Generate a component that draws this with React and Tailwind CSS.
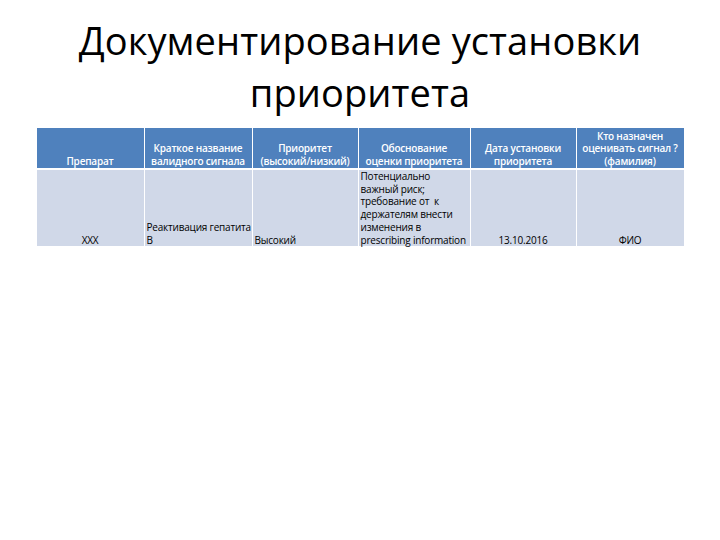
import React from "react";

const headers = [
  ["Препарат"],
  ["Краткое название", "валидного сигнала"],
  ["Приоритет", "(высокий/низкий)"],
  ["Обоснование", "оценки приоритета"],
  ["Дата установки", "приоритета"],
  ["Кто назначен", "оценивать сигнал ?", "(фамилия)"],
];

const lines = (arr) =>
  arr.map((t, i) => (
    <React.Fragment key={i}>
      {i > 0 && <br />}
      {t}
    </React.Fragment>
  ));

export default function App() {
  return (
    <div
      className="w-[720px] h-[540px] bg-white flex flex-col items-center"
      style={{ fontFamily: '"Open Sans", "Noto Sans", sans-serif' }}
    >
      <h1 className="mt-[14px] w-[660px] text-center text-[38px] leading-[52px] text-black font-normal tracking-[0.1px]">
        Документирование установки
        <br />
        приоритета
      </h1>

      <table className="mt-[10px] border-collapse table-fixed w-[648px] text-[10px] leading-[12.7px] tracking-[-0.2px] whitespace-nowrap">
        <colgroup>
          <col className="w-[108px]" />
          <col className="w-[108px]" />
          <col className="w-[106px]" />
          <col className="w-[112px]" />
          <col className="w-[106px]" />
          <col className="w-[108px]" />
        </colgroup>
        <thead>
          <tr className="h-[41px] bg-[#4f81bd]">
            {headers.map((h, i) => (
              <th
                key={i}
                className="border-x border-b-2 border-white align-bottom text-center text-white font-semibold px-[2px] pb-[1px] leading-[12.5px]"
              >
                {lines(h)}
              </th>
            ))}
          </tr>
        </thead>
        <tbody>
          <tr className="h-[77px] bg-[#d0d8e8] text-black">
            <td className="border-x border-white align-bottom text-center px-[2px]">XXX</td>
            <td className="border-x border-white align-bottom text-left px-[2px]">
              {lines(["Реактивация гепатита", "В"])}
            </td>
            <td className="border-x border-white align-bottom text-left px-[2px]">Высокий</td>
            <td className="border-x border-white align-bottom text-left px-[2px]">
              {lines([
                "Потенциально",
                "важный риск;",
                "требование от\u00a0 к",
                "держателям внести",
                "изменения в",
                "prescribing information",
              ])}
            </td>
            <td className="border-x border-white align-bottom text-center px-[2px]">13.10.2016</td>
            <td className="border-x border-white align-bottom text-center px-[2px]">ФИО</td>
          </tr>
        </tbody>
      </table>
    </div>
  );
}
